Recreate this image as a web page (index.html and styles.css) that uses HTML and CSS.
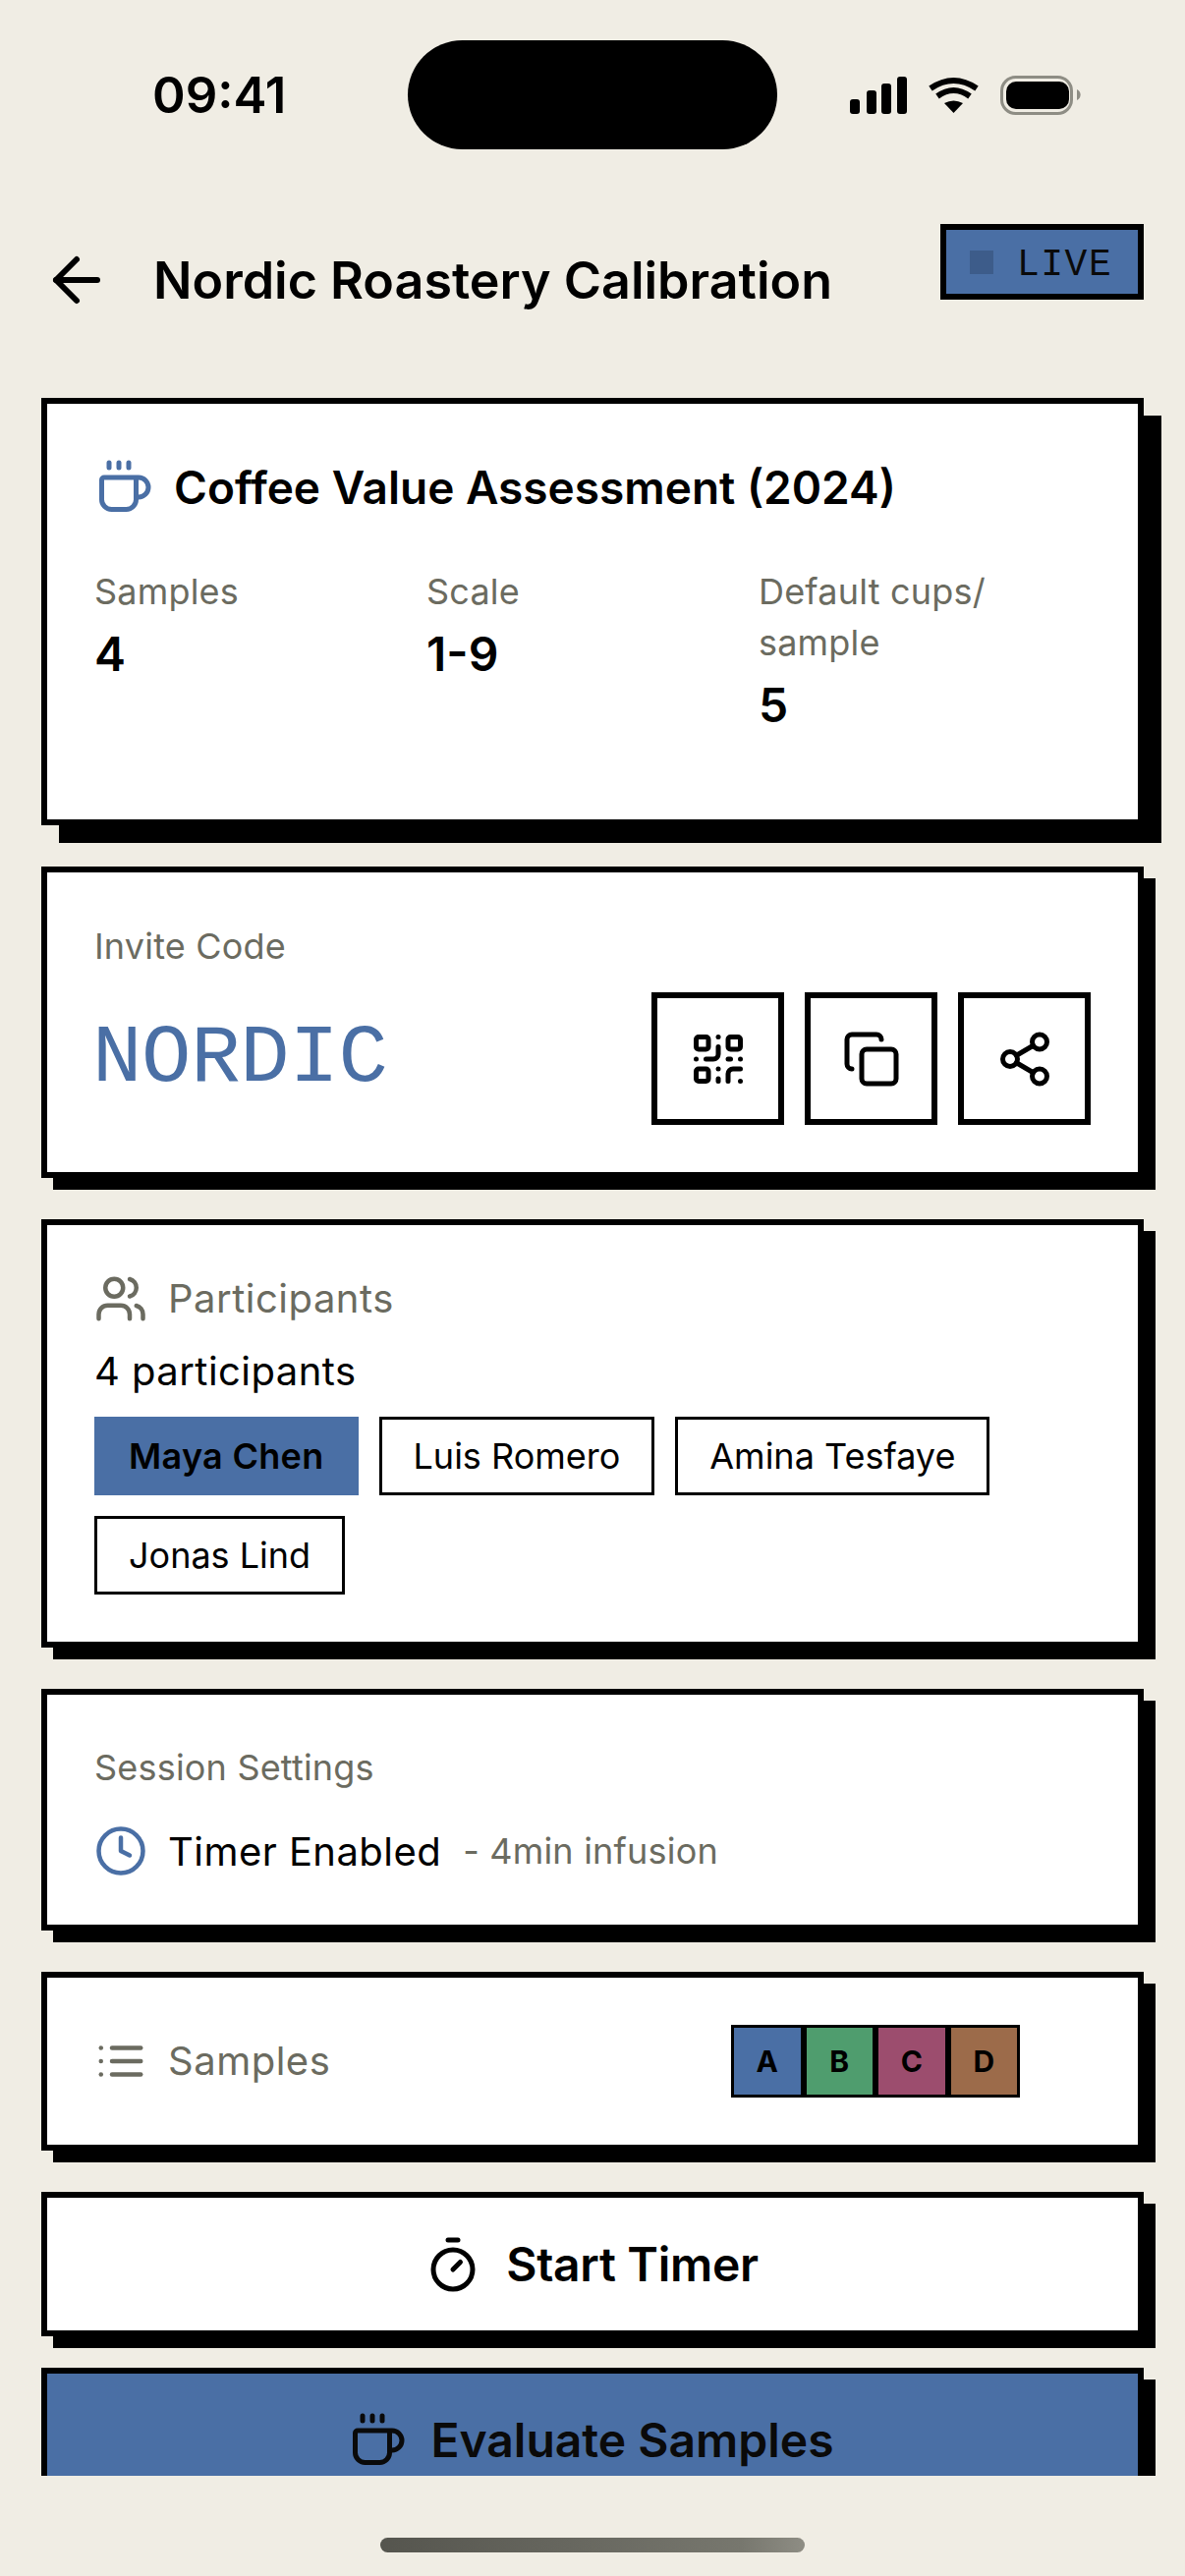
FILE: index.html
```html
<!DOCTYPE html>
<html lang="en">
<head>
    <title>Nordic Roastery Calibration</title>
    <link rel="stylesheet" href="styles.css">
</head>
<body>
<div class="screen">
    <div class="status">
        <span class="time">09:41</span>
        <span class="island"></span>
        <svg class="status-icons" width="236" height="40" viewBox="0 0 236 40">
            <rect x="1" y="24" width="10" height="15" rx="3"/>
            <rect x="18" y="15" width="10" height="24" rx="3"/>
            <rect x="33" y="8" width="10" height="31" rx="3"/>
            <rect x="49" y="1" width="10" height="38" rx="3"/>
            <g fill="none" stroke="#000" stroke-width="6">
                <path d="M83 13Q106.500 -3 130 13"/>
                <path d="M90 21Q106.500 9 123 21"/>
            </g>
            <path d="M97 28Q106.500 23 116 28L106.500 38Z"/>
            <rect x="155.500" y="1.500" width="71" height="37" rx="14" fill="none" stroke="#8e8d84" stroke-width="3"/>
            <rect x="160" y="6" width="64" height="28" rx="10"/>
            <path d="M232 14a6 6 0 0 1 0 11Z" fill="#8e8d84"/>
        </svg>
    </div>

    <div class="topbar">
        <div class="topbar-left">
            <svg class="icon-back" viewBox="0 0 24 24"><path d="m12 19-7-7 7-7"/><path d="M19 12H5"/></svg>
            <h1>Nordic Roastery Calibration</h1>
        </div>
        <div class="live"><span class="live-dot"></span><span class="live-text">LIVE</span></div>
    </div>

    <div class="content">
        <div class="card card-deep">
            <div class="assess-title">
                <svg class="icon icon-lg blue" viewBox="0 0 24 24"><path d="M10 2v2"/><path d="M14 2v2"/><path d="M16 8a1 1 0 0 1 1 1v8a4 4 0 0 1-4 4H7a4 4 0 0 1-4-4V9a1 1 0 0 1 1-1h14a4 4 0 1 1 0 8h-1"/><path d="M6 2v2"/></svg>
                <h2>Coffee Value Assessment (2024)</h2>
            </div>
            <div class="stats">
                <div>
                    <div class="label">Samples</div>
                    <div class="value">4</div>
                </div>
                <div>
                    <div class="label">Scale</div>
                    <div class="value">1-9</div>
                </div>
                <div>
                    <div class="label">Default cups/<br>sample</div>
                    <div class="value">5</div>
                </div>
            </div>
        </div>

        <div class="card invite-card">
            <div class="label">Invite Code</div>
            <div class="invite-row">
                <span class="code">NORDIC</span>
                <div class="invite-actions">
                    <button class="square-btn">
                        <svg class="icon icon-lg" viewBox="0 0 24 24"><rect width="5" height="5" x="3" y="3" rx="1"/><rect width="5" height="5" x="16" y="3" rx="1"/><rect width="5" height="5" x="3" y="16" rx="1"/><path d="M21 16h-3a2 2 0 0 0-2 2v3"/><path d="M21 21v.01"/><path d="M12 7v3a2 2 0 0 1-2 2H7"/><path d="M3 12h.01"/><path d="M12 3h.01"/><path d="M12 16v.01"/><path d="M16 12h1"/><path d="M21 12v.01"/><path d="M12 21v-1"/></svg>
                    </button>
                    <button class="square-btn">
                        <svg class="icon icon-lg" viewBox="0 0 24 24"><rect width="14" height="14" x="8" y="8" rx="2"/><path d="M4 16c-1.100 0-2-.9-2-2V4c0-1.100.9-2 2-2h10c1.100 0 2 .9 2 2"/></svg>
                    </button>
                    <button class="square-btn">
                        <svg class="icon icon-lg" viewBox="0 0 24 24"><circle cx="18" cy="5" r="3"/><circle cx="6" cy="12" r="3"/><circle cx="18" cy="19" r="3"/><path d="M8.590 13.510 15.420 17.490"/><path d="M15.410 6.510 8.590 10.490"/></svg>
                    </button>
                </div>
            </div>
        </div>

        <div class="card">
            <div class="row-head">
                <svg class="icon grey" viewBox="0 0 24 24"><path d="M16 21v-2a4 4 0 0 0-4-4H6a4 4 0 0 0-4 4v2"/><circle cx="9" cy="7" r="4"/><path d="M22 21v-2a4 4 0 0 0-3-3.870"/><path d="M16 3.130a4 4 0 0 1 0 7.750"/></svg>
                <span class="head-text">Participants</span>
            </div>
            <div class="count">4 participants</div>
            <div class="chips">
                <span class="chip chip-active">Maya Chen</span>
                <span class="chip">Luis Romero</span>
                <span class="chip">Amina Tesfaye</span>
                <span class="chip">Jonas Lind</span>
            </div>
        </div>

        <div class="card">
            <div class="label">Session Settings</div>
            <div class="row-head timer-row">
                <svg class="icon blue" viewBox="0 0 24 24"><circle cx="12" cy="12" r="10"/><path d="M12 6v6l4 2"/></svg>
                <span class="timer-text">Timer Enabled</span>
                <span class="timer-note">- 4min infusion</span>
            </div>
        </div>

        <div class="card">
            <div class="samples-row">
                <div class="row-head">
                    <svg class="icon grey" viewBox="0 0 24 24"><path d="M3 12h.01"/><path d="M3 18h.01"/><path d="M3 6h.01"/><path d="M8 12h13"/><path d="M8 18h13"/><path d="M8 6h13"/></svg>
                    <span class="head-text">Samples</span>
                </div>
                <div class="swatches">
                    <span class="swatch s-a">A</span>
                    <span class="swatch s-b">B</span>
                    <span class="swatch s-c">C</span>
                    <span class="swatch s-d">D</span>
                </div>
            </div>
        </div>

        <button class="card action">
            <svg class="icon icon-lg" viewBox="0 0 24 24"><path d="M10 2h4"/><path d="m12 14 3-3"/><circle cx="12" cy="14" r="8"/></svg>
            Start Timer
        </button>

        <button class="card action action-primary">
            <svg class="icon icon-lg" viewBox="0 0 24 24"><path d="M10 2v2"/><path d="M14 2v2"/><path d="M16 8a1 1 0 0 1 1 1v8a4 4 0 0 1-4 4H7a4 4 0 0 1-4-4V9a1 1 0 0 1 1-1h14a4 4 0 1 1 0 8h-1"/><path d="M6 2v2"/></svg>
            Evaluate Samples
        </button>
    </div>

    <div class="home-bar"></div>
</div>
</body>
</html>
```

FILE: styles.css
```css
* {
  box-sizing: border-box;
}
body {
  margin: 0;
  background-color: #f0ede4;
  color: #000;
  font-family: Inter, "Noto Sans", sans-serif;
}
h1, h2 {
  margin: 0;
  font-weight: 600;
}
button {
  font-family: inherit;
  color: inherit;
  padding: 0;
}
.screen {
  width: 1206px;
  height: 2622px;
  overflow: hidden;
}

/* status bar */
.status {
  display: flex;
  align-items: center;
  height: 111px;
  margin-top: 41px;
  padding-left: 155px;
}
.time {
  width: 260px;
  font-size: 51px;
  font-weight: 600;
}
.island {
  width: 376px;
  height: 111px;
  margin-right: 73px;
  border-radius: 56px;
  background-color: #000;
}
.status-icons {
  flex-shrink: 0;
}

/* header */
.topbar {
  display: flex;
  justify-content: space-between;
  align-items: flex-start;
  height: 177px;
  margin-top: 76px;
  padding: 0 42px;
}
.topbar-left {
  display: flex;
  align-items: center;
  gap: 42px;
  margin-top: 21px;
}
.topbar h1 {
  font-size: 52px;
}
.icon-back {
  width: 72px;
  height: 72px;
  fill: none;
  stroke: #000;
  stroke-width: 2;
  stroke-linecap: round;
  stroke-linejoin: round;
}
.live {
  display: flex;
  align-items: center;
  gap: 24px;
  width: 207px;
  height: 77px;
  padding-left: 24px;
  border: 6px solid #000;
  background-color: #4a6fa5;
  color: #0a0a0a;
  font-family: "Liberation Mono", monospace;
  font-size: 38px;
  letter-spacing: 1.500px;
}
.live-dot {
  width: 24px;
  height: 24px;
  background-color: #3d5c8a;
}
.live-text {
  margin-top: 6px;
}

/* cards */
.content {
  display: flex;
  flex-direction: column;
  gap: 42px;
  height: 2115px;
  padding: 0 42px;
  overflow: hidden;
}
.card {
  flex-shrink: 0;
  width: 100%;
  padding: 48px;
  border: 6px solid #000;
  background-color: #fff;
  box-shadow: 12px 12px 0 #000;
}
.card-deep {
  box-shadow: 18px 18px 0 #000;
}
.icon {
  flex-shrink: 0;
  width: 54px;
  height: 54px;
  fill: none;
  stroke: currentColor;
  stroke-width: 2;
  stroke-linecap: round;
  stroke-linejoin: round;
}
.icon-lg {
  width: 60px;
  height: 60px;
}
.blue {
  color: #4a6fa5;
}
.grey {
  color: #6b6b60;
}
.label {
  color: #6b6b60;
  font-size: 36px;
  letter-spacing: .2px;
  line-height: 52px;
}

/* assessment card */
.assess-title {
  display: flex;
  align-items: center;
  gap: 21px;
  height: 72px;
  margin: 1px 0 44px;
}
.assess-title h2 {
  font-size: 46px;
}
.stats {
  display: grid;
  grid-template-columns: repeat(3, 1fr);
  margin-bottom: 32px;
}
.value {
  margin-top: 2px;
  font-size: 48px;
  font-weight: 600;
  line-height: 72px;
}

/* invite card */
.invite-card .label {
  margin-top: 1px;
}
.invite-row {
  display: flex;
  justify-content: space-between;
  align-items: center;
  margin-top: 21px;
}
.code {
  margin-left: -2px;
  color: #4a6fa5;
  font-family: "Liberation Mono", monospace;
  font-size: 84px;
  letter-spacing: -.3px;
}
.invite-actions {
  display: flex;
  gap: 21px;
}
.square-btn {
  display: flex;
  justify-content: center;
  align-items: center;
  width: 135px;
  height: 135px;
  border: 6px solid #000;
  background-color: #fff;
}

/* participants */
.row-head {
  display: flex;
  align-items: center;
  gap: 21px;
  height: 54px;
}
.head-text {
  margin-top: -2px;
  color: #6b6b60;
  font-size: 40px;
  letter-spacing: .5px;
}
.count {
  margin: 17px 0 16px;
  font-size: 40px;
  letter-spacing: .45px;
  line-height: 60px;
}
.chips {
  display: flex;
  flex-wrap: wrap;
  gap: 21px;
}
.chip {
  padding: 0 32px;
  border: 3px solid #000;
  font-size: 36px;
  line-height: 74px;
}
.chip-active {
  border-color: #4a6fa5;
  background-color: #4a6fa5;
  font-weight: 600;
  letter-spacing: .3px;
}

/* settings */
.timer-row {
  margin-top: 32px;
}
.timer-text {
  font-size: 40px;
  letter-spacing: .45px;
}
.timer-note {
  margin-left: 1px;
  color: #6b6b60;
  font-size: 36px;
  letter-spacing: .2px;
}

/* samples */
.samples-row {
  display: flex;
  justify-content: space-between;
  align-items: center;
}
.swatches {
  display: flex;
  margin-right: 72px;
}
.swatch {
  display: flex;
  justify-content: center;
  align-items: center;
  width: 73.500px;
  height: 74px;
  border: 3px solid #000;
  font-size: 30px;
  font-weight: 700;
}
.s-a { background-color: #4a6fa5; }
.s-b { background-color: #4f9d6e; }
.s-c { background-color: #9c4d6e; }
.s-d { background-color: #9c6b4a; }

/* action buttons */
.action {
  display: flex;
  justify-content: center;
  align-items: center;
  gap: 24px;
  height: 147px;
  padding: 0 3px 0 0;
  font-size: 48px;
  font-weight: 600;
  letter-spacing: -.3px;
}
.action-primary {
  margin-top: -10px;
  background-color: #4a6fa5;
  color: #0a0a0a;
  letter-spacing: 0;
}

.home-bar {
  width: 432px;
  height: 15px;
  margin: 63px 0 0 387px;
  border-radius: 8px;
  background: linear-gradient(90deg, #55554e, #77776e 85%, #8e8d84);
}
```
